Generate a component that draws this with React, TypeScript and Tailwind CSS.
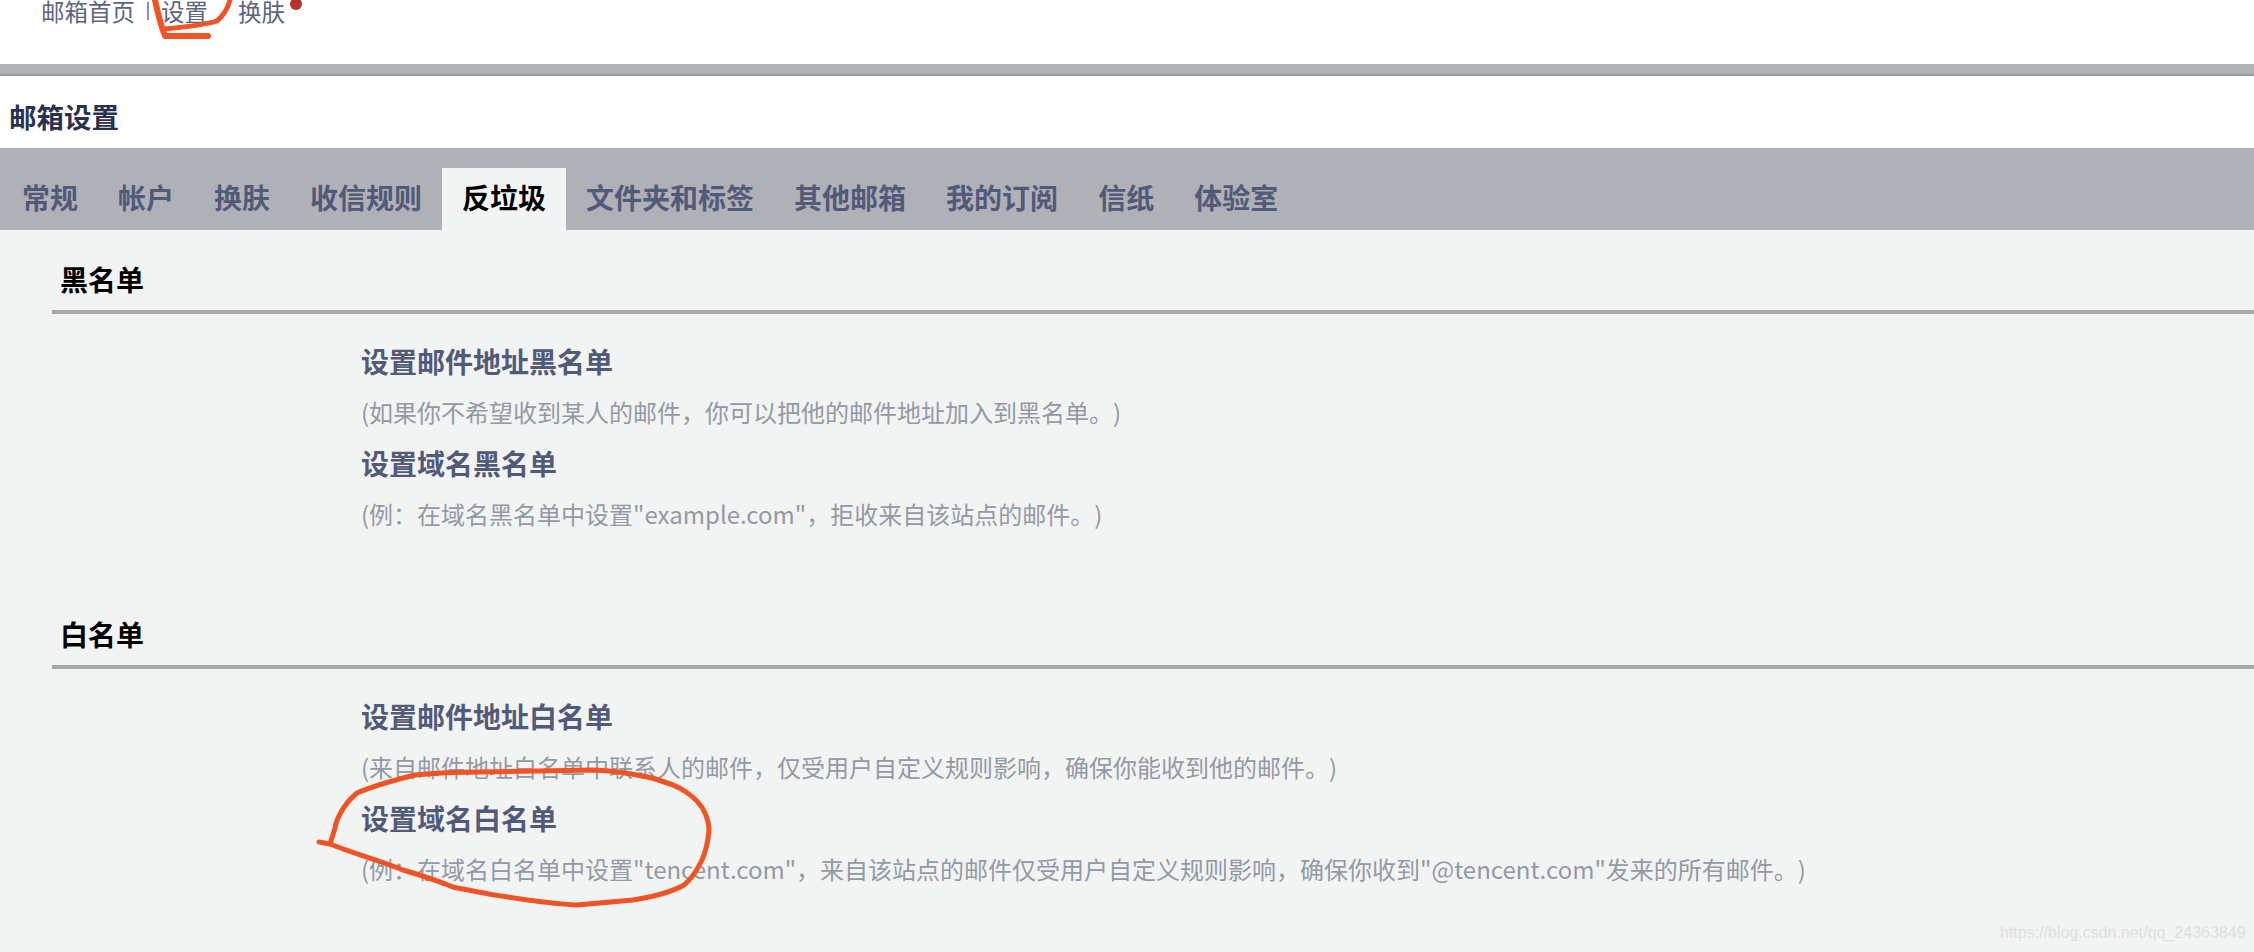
import React from 'react';

const tabs = ['常规', '帐户', '换肤', '收信规则', '反垃圾', '文件夹和标签', '其他邮箱', '我的订阅', '信纸', '体验室'];

const sections = [
  {
    title: '黑名单',
    items: [
      { name: '设置邮件地址黑名单', desc: '(如果你不希望收到某人的邮件，你可以把他的邮件地址加入到黑名单。)' },
      { name: '设置域名黑名单', desc: '(例：在域名黑名单中设置"example.com"，拒收来自该站点的邮件。)' },
    ],
  },
  {
    title: '白名单',
    items: [
      { name: '设置邮件地址白名单', desc: '(来自邮件地址白名单中联系人的邮件，仅受用户自定义规则影响，确保你能收到他的邮件。)' },
      { name: '设置域名白名单', desc: '(例：在域名白名单中设置"tencent.com"，来自该站点的邮件仅受用户自定义规则影响，确保你收到"@tencent.com"发来的所有邮件。)' },
    ],
  },
];

export default function App() {
  return (
    <div className="relative h-[952px] w-[2254px] overflow-hidden bg-white font-['Noto_Sans_CJK_SC',sans-serif] [text-spacing-trim:space-all]">
      {/* Top links */}
      <div className="h-[64px] pl-[41px]">
        <div className="flex h-[22px] items-center text-[23.5px] leading-[22px] text-[#5c6480]">
          <span>邮箱首页</span>
          <span className="ml-[12px] h-[18px] w-[2px] bg-[#8d93a5]" />
          <span className="ml-[12px]">设置</span>
          <span className="ml-[30px]">换肤</span>
          <span className="ml-[5px] -mt-[15px] h-[12px] w-[12px] rounded-full bg-[#b8322a]" />
        </div>
      </div>
      <div className="h-[12px] border-b-[2px] border-[#999b9b] bg-[#b0b3b3]" />

      <div className="flex h-[72px] items-center pl-[9px] pt-[10px] text-[27.5px] font-bold text-[#2a3150]">邮箱设置</div>

      {/* Tabs */}
      <div className="flex h-[82px] items-end bg-[#afb1b6] pl-[2px]">
        {tabs.map((tab) => (
          <div
            key={tab}
            className={
              tab === '反垃圾'
                ? 'flex h-[62px] items-center bg-[#f2f4f3] px-[20px] pb-[4px] text-[28px] font-bold text-black'
                : 'flex h-[62px] items-center px-[20px] pb-[4px] text-[28px] font-bold text-[#525a7a]'
            }
          >
            {tab}
          </div>
        ))}
      </div>

      {/* Content */}
      <div className="h-[722px] bg-[#f2f4f3] pl-[52px] pt-[20px]">
        {sections.map((section) => (
          <div key={section.title} className="mb-[65px]">
            <div className="flex h-[64px] items-center border-b-[4px] border-[#a8a8a8] pb-[2px] pl-[8px] text-[28px] font-bold leading-none text-black">
              {section.title}
            </div>
            <div className="pl-[309px] pt-[22px]">
              {section.items.map((item) => (
                <div key={item.name}>
                  <div className="flex h-[51px] items-center pb-[2px] text-[28px] font-bold text-[#525a7a]">{item.name}</div>
                  <div className="flex h-[51px] items-center whitespace-pre pb-[2px] text-[24px] text-[#9399a5]">{item.desc}</div>
                </div>
              ))}
            </div>
          </div>
        ))}
      </div>

      {/* Hand-drawn annotations */}
      <svg className="absolute left-0 top-0" width="2254" height="952" fill="none" stroke="#f25324" strokeWidth="5" strokeLinecap="round" strokeLinejoin="round">
        <path d="M155 0 C158 14 161 26 165 36 L208 36" strokeWidth="6" />
        <path d="M164 29 C185 27 205 25 217 21 C224 15 228 8 230 0" />
        <path d="M319 842 L330 844 L335 828 C337 816 346 802 357 793 C375 785 395 780 415 775 C435 773 458 772 480 772 L594 770 C615 771 635 774 652 778 C668 783 678 786 686 792 C695 798 702 806 705 813 C708 820 709 825 709 830 C708 842 706 851 702 860 C697 870 692 879 684 885 C670 893 652 897 633 900 L577 905 C550 904 520 899 495 895 C480 892 466 890 453 887 C436 880 420 875 403 870 C378 860 352 853 330 844" />
      </svg>

      <div className="absolute left-[2000px] top-[923px] font-['Liberation_Sans',sans-serif] text-[16px] leading-[20px] text-[#dcdfe0]">https://blog.csdn.net/qq_24363849</div>
    </div>
  );
}
